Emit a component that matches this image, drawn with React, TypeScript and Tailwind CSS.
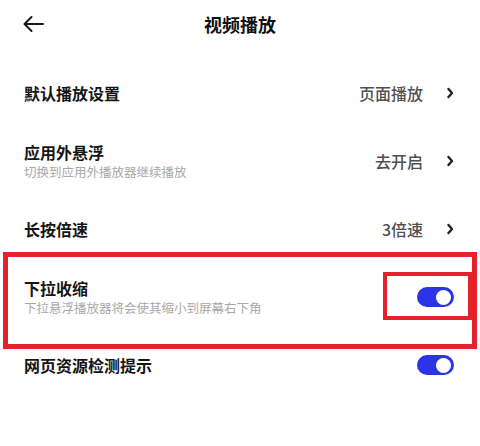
const font = { fontFamily: '"Noto Sans CJK SC", "Noto Sans", sans-serif' };

function Chevron() {
  return (
    <svg width="8" height="12" viewBox="0 0 8 12" className="ml-[23px]">
      <path d="M2.5 2 L6 6 L2.5 10" fill="none" stroke="#222" strokeWidth="2.4" strokeLinecap="round" strokeLinejoin="round" />
    </svg>
  );
}

function Toggle() {
  return (
    <div className="w-[37px] h-[20px] rounded-full bg-[#2b34e6] flex items-center justify-end pr-[3px]">
      <div className="w-[15px] h-[15px] rounded-full bg-white" />
    </div>
  );
}

function Row({ title, sub, value, toggle }: { title: string; sub?: string; value?: string; toggle?: boolean }) {
  return (
    <div className="h-[68px] flex items-center justify-between pl-6 pr-[26px]">
      <div className="flex flex-col">
        <span className="text-[16px] leading-[20px] font-semibold text-[#151515]">{title}</span>
        {sub && <span className="text-[12.5px] leading-[16px] mt-[2px] text-[#a8a8a8]">{sub}</span>}
      </div>
      {toggle ? (
        <Toggle />
      ) : (
        <div className="flex items-center">
          <span className="text-[16px] font-medium text-[#505050]">{value}</span>
          <Chevron />
        </div>
      )}
    </div>
  );
}

export default function App() {
  return (
    <div className="relative w-[480px] h-[446px] bg-white overflow-hidden" style={font}>
      <div className="relative h-12 flex items-center justify-center">
        <svg width="22" height="18" viewBox="0 0 22 18" className="absolute left-[22px] top-[15px]">
          <path d="M21 9 H3 M9.5 2 L2.5 9 L9.5 16" fill="none" stroke="#1a1a1a" strokeWidth="2" strokeLinecap="round" strokeLinejoin="round" />
        </svg>
        <span className="text-[18px] font-bold text-[#111]">视频播放</span>
      </div>
      <div className="pt-[11px]">
        <Row title="默认播放设置" value="页面播放" />
        <Row title="应用外悬浮" sub="切换到应用外播放器继续播放" value="去开启" />
        <Row title="长按倍速" value="3倍速" />
        <Row title="下拉收缩" sub="下拉悬浮播放器将会使其缩小到屏幕右下角" toggle />
        <Row title="网页资源检测提示" toggle />
      </div>
      <div className="absolute left-[3px] top-[252px] w-[474px] h-[97px] border-[5px] border-[#e3222b]" />
      <div className="absolute left-[383px] top-[272px] w-[89px] h-[48px] border-[4px] border-[#e3222b]" />
    </div>
  );
}
